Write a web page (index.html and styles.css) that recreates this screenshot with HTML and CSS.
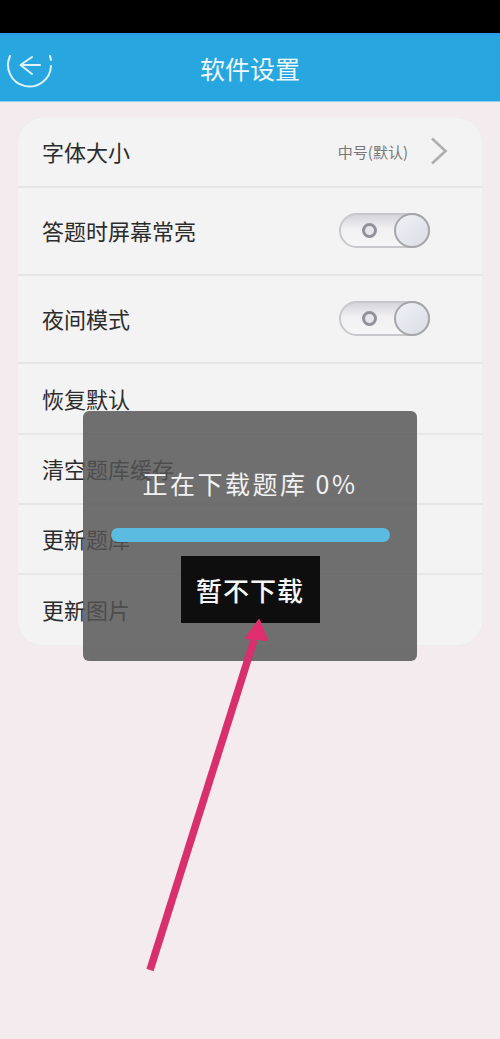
FILE: index.html
```html
<!DOCTYPE html>
<html lang="zh-CN">
<head>
<meta charset="utf-8">
<title>软件设置</title>
<link rel="stylesheet" href="styles.css">
</head>
<body>
<div class="status"></div>
<header class="nav">
  <svg class="back" width="50" height="40" viewBox="0 0 50 40" fill="none" stroke="#dff3fa" stroke-linecap="round" stroke-linejoin="round">
    <path d="M5 5 A21.500 21.500 0 1 0 46 15" stroke-width="2"/>
    <path d="M45 5 L46 9" stroke-width="2"/>
    <path d="M35 14 H16 M27 6 L15.500 14 L27 23" stroke-width="2"/>
  </svg>
  <h1 class="title">软件设置</h1>
</header>
<main class="card">
  <div class="row row-s"><span>字体大小</span>
    <span class="value">中号(默认)</span>
    <svg class="chev" width="18" height="28" viewBox="0 0 18 28" fill="none"><path d="M2 1.500 L15.500 14 L2 26.500" stroke="#aeaeae" stroke-width="2.600"/></svg>
  </div>
  <div class="row row-l"><span>答题时屏幕常亮</span><div class="switch"><i class="dot"></i><i class="knob"></i></div></div>
  <div class="row row-l"><span>夜间模式</span><div class="switch"><i class="dot"></i><i class="knob"></i></div></div>
  <div class="row row-m"><span>恢复默认</span></div>
  <div class="row row-s"><span>清空题库缓存</span></div>
  <div class="row row-s"><span>更新题库</span></div>
  <div class="row row-s last"><span>更新图片</span></div>
</main>
<div class="dialog">
  <p class="msg">正在下载题库 0%</p>
  <div class="bar"></div>
  <button class="btn">暂不下载</button>
</div>
<svg class="arrow" width="500" height="1039" viewBox="0 0 500 1039">
  <path d="M150 970 L254 640" stroke="#d8306c" stroke-width="7.500" fill="none"/>
  <path d="M259 620 L267 640 L246 638 Z" fill="#df2f6d" stroke="#df2f6d" stroke-width="2" stroke-linejoin="round"/>
</svg>
</body>
</html>
```
FILE: styles.css
```css
* { box-sizing: border-box; }
html, body { margin: 0; padding: 0; }
body {
  width: 500px;
  height: 1039px;
  overflow: hidden;
  position: relative;
  background: #f3ebee;
  font-family: "Noto Sans CJK SC", "Noto Sans", sans-serif;
}
.status { height: 33px; background: #000; }
.nav {
  height: 69px;
  background: #28a6df;
  border-top: 3px solid #2a9ee8;
  border-bottom: 1px solid #8fd0ef;
  display: flex;
  align-items: center;
  justify-content: center;
  position: relative;
}
.back { position: absolute; left: 5px; top: 15px; }
.title {
  margin: 0;
  font-size: 25px;
  line-height: 32px;
  font-weight: 400;
  color: #eef8fb;
  position: relative;
  top: -1px;
}
.card {
  margin: 15px 17px 0 17px;
  width: 466px;
  background: #f3f3f3;
  border: 1px solid #ededed;
  border-radius: 26px;
  overflow: hidden;
}
.row {
  display: flex;
  align-items: center;
  padding: 0 34px 2px 24px;
  font-size: 22px;
  color: #2c2c2c;
  border-bottom: 2px solid #e6e6e6;
}
.row > span:first-child { flex: 1; }
.row-s { height: 70px; }
.row-m { height: 71px; }
.row-l { height: 88px; }
.last { border-bottom: 0; }
.value { font-size: 15px; color: #777; margin-right: 22px; }
.chev { display: block; }
.switch {
  width: 91px;
  height: 35px;
  margin-right: 18px;
  border-radius: 18px;
  border: 2px solid #c8c7cc;
  background: linear-gradient(#d6d6da, #f1f1f3 45%, #f6f6f7);
  display: flex;
  align-items: center;
  justify-content: space-between;
  padding-left: 21px;
  position: relative;
}
.dot {
  width: 15px;
  height: 15px;
  border-radius: 50%;
  border: 3px solid #92909a;
  background: #e6e6ea;
}
.knob {
  width: 36px;
  height: 35px;
  margin-right: -2px;
  border-radius: 50%;
  border: 2px solid #a5a5ab;
  background: linear-gradient(135deg, #eef1f6, #dcdde6);
}
.dialog {
  position: absolute;
  left: 83px;
  top: 411px;
  width: 334px;
  height: 250px;
  border-radius: 6px;
  background: rgba(84, 84, 84, 0.83);
  display: flex;
  flex-direction: column;
  align-items: center;
}
.msg {
  margin: 54px 0 0;
  font-size: 25px;
  line-height: 36px;
  letter-spacing: 2.500px;
  color: #f2f2f2;
}
.bar {
  margin-top: 27px;
  width: 279px;
  height: 14px;
  border-radius: 7px;
  background: #5bbbe0;
}
.btn {
  margin-top: 14px;
  width: 139px;
  height: 67px;
  border: 0;
  padding: 0;
  background: #0e0e0e;
  color: #f6f6f6;
  font-family: inherit;
  font-size: 26px;
  font-weight: 500;
  letter-spacing: 1px;
}
.arrow { position: absolute; left: 0; top: 0; pointer-events: none; }
```
